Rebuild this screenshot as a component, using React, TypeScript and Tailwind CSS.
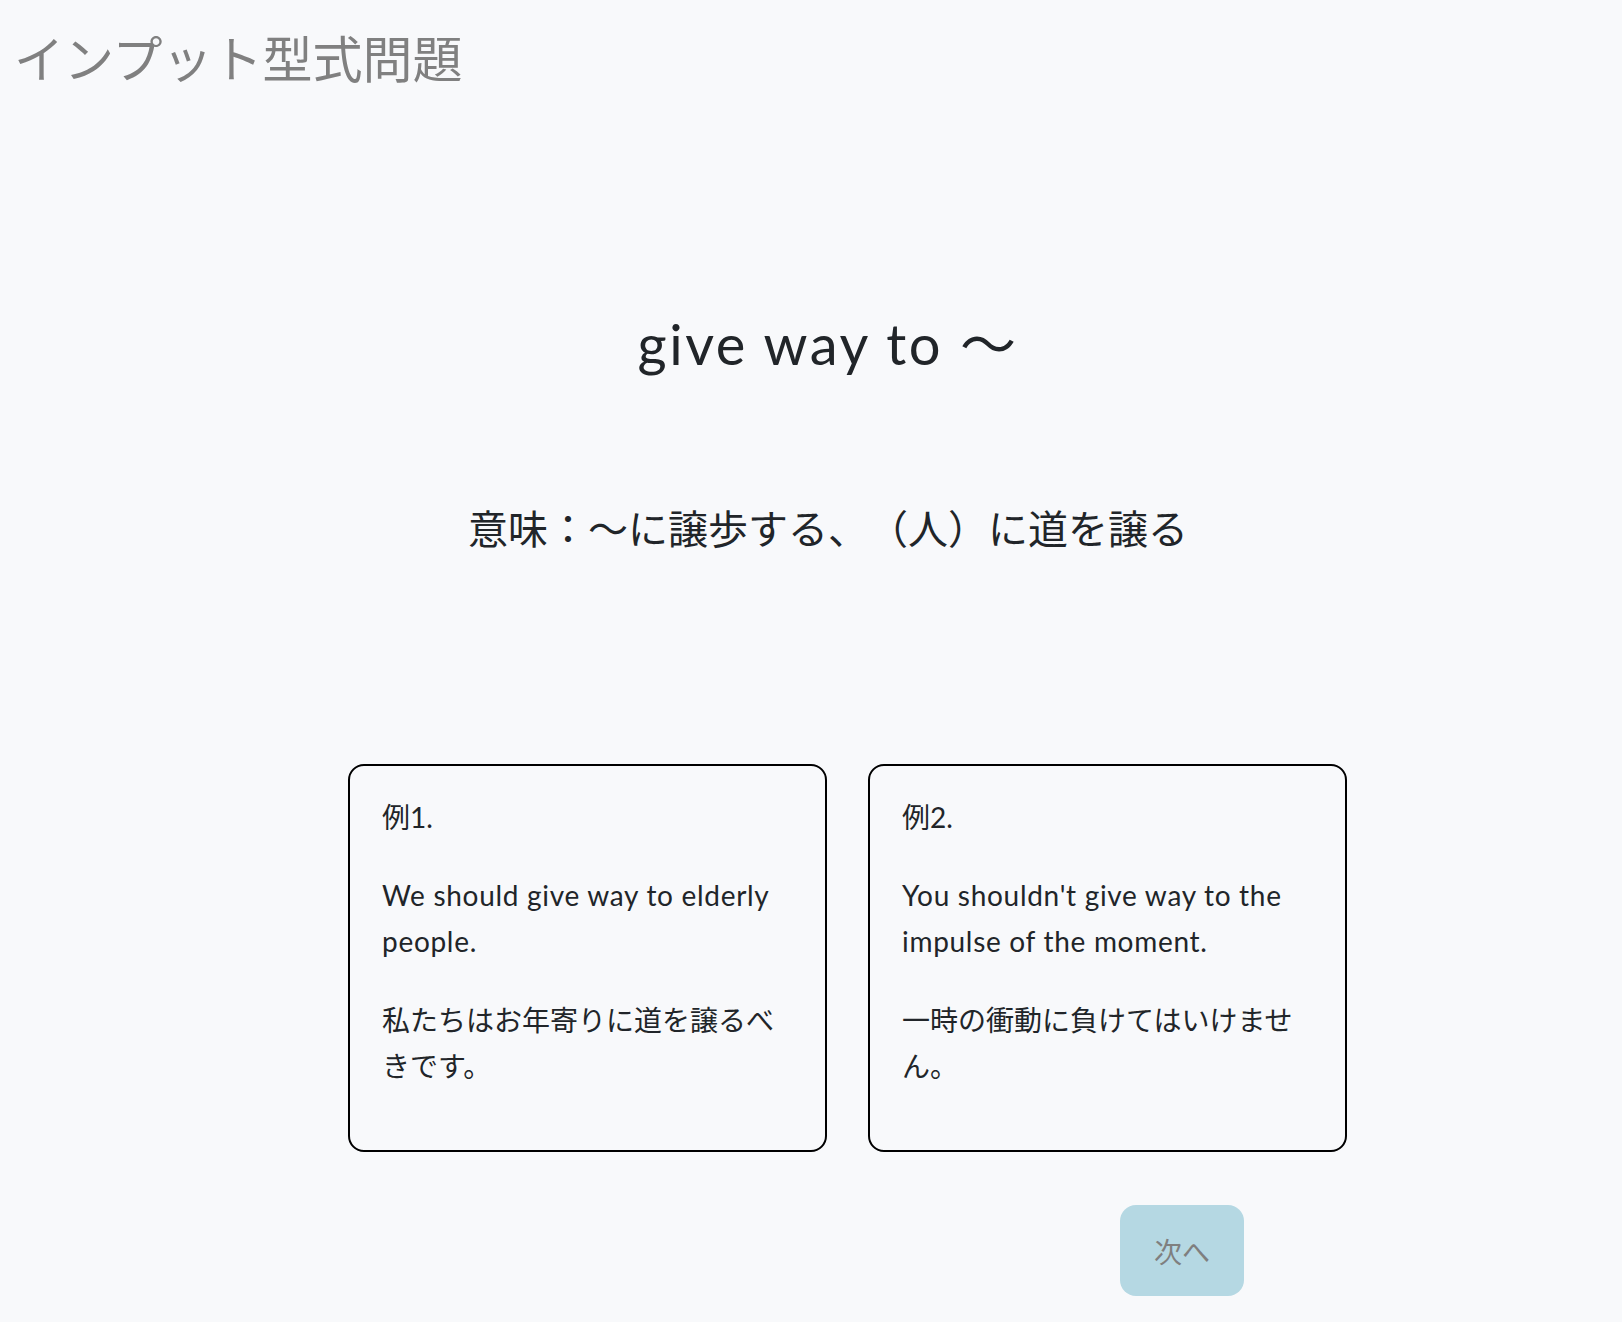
import React from 'react';

const examples = [
  {
    label: '例1.',
    en: 'We should give way to elderly people.',
    ja: '私たちはお年寄りに道を譲るべきです。',
  },
  {
    label: '例2.',
    en: "You shouldn't give way to the impulse of the moment.",
    ja: '一時の衝動に負けてはいけません。',
  },
];

export default function App() {
  return (
    <div className="min-h-[1322px] w-full bg-[#f8f9fb] text-[#212529] font-['Lato','Noto_Sans_CJK_JP',sans-serif] [text-spacing-trim:space-all]">
      {/* Page title */}
      <h1 className="pl-[14px] pt-[27px] text-[50px] leading-[58px] font-normal text-[#808080] font-['Noto_Sans_CJK_JP',sans-serif]">
        インプット型式問題
      </h1>

      {/* Phrase + meaning */}
      <div className="pl-[34px] text-center">
        <h2 className="mt-[222px] text-[56px] leading-[68px] font-normal tracking-[0.045em]">
          give way to <span className="font-['Noto_Sans_CJK_JP',sans-serif]">〜</span>
        </h2>
        <p className="mt-[125px] text-[40px] leading-[48px] font-['Noto_Sans_CJK_JP',sans-serif]">
          意味：〜に譲歩する、（人）に道を譲る
        </p>
      </div>

      {/* Example cards */}
      <div className="mt-[213px] pl-[348px] flex gap-[41px]">
        {examples.map((ex) => (
          <div
            key={ex.label}
            className="w-[479px] h-[388px] border-2 border-black rounded-2xl px-8 pt-[28px] text-[28px] leading-[46px]"
          >
            <p className="mb-8">{ex.label}</p>
            <p className="mb-8 tracking-[0.025em]">{ex.en}</p>
            <p className="mb-8 font-['Noto_Sans_CJK_JP',sans-serif]">{ex.ja}</p>
          </div>
        ))}
      </div>

      {/* Next button */}
      <div className="pl-[1120px] mt-[53px]">
        <button className="w-[124px] h-[91px] rounded-2xl bg-[#b5d8e3] text-[28px] text-[#7f7f7f] font-['Noto_Sans_CJK_JP',sans-serif]">
          次へ
        </button>
      </div>
    </div>
  );
}
